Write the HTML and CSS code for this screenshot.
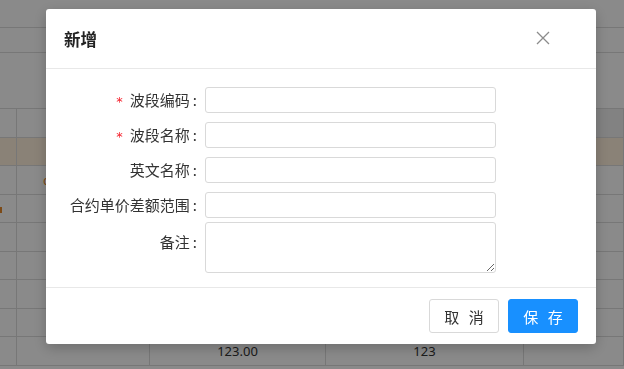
FILE: index.html
```html
<!DOCTYPE html>
<html lang="zh-CN">
    <head>
        <meta charset="UTF-8">
        <meta name="viewport" content="width=device-width, initial-scale=1.0">
        <title>波段管理</title>

        <link rel="stylesheet" href="styles.css">
    </head>
    <body>
        <div class="page">
            <div class="toolbar"></div>
            <div class="filters"></div>
            <div class="spacer"></div>

            <div class="grid">
                <div class="row head"><span class="c1"></span><span class="c2"></span><span class="c3"></span><span class="c4"></span><span class="c5"></span></div>
                <div class="row picked"><span class="c1"></span><span class="c2"></span><span class="c3"></span><span class="c4"></span><span class="c5"></span></div>
                <div class="row"><span class="c1"></span><span class="c2"><em class="tag">c</em></span><span class="c3"></span><span class="c4"></span><span class="c5"></span></div>
                <div class="row"><span class="c1"><i class="mark"></i></span><span class="c2"></span><span class="c3"></span><span class="c4"></span><span class="c5"></span></div>
                <div class="row"><span class="c1"></span><span class="c2"></span><span class="c3"></span><span class="c4"></span><span class="c5"></span></div>
                <div class="row"><span class="c1"></span><span class="c2"></span><span class="c3"></span><span class="c4"></span><span class="c5"></span></div>
                <div class="row"><span class="c1"></span><span class="c2"></span><span class="c3"></span><span class="c4"></span><span class="c5"></span></div>
                <div class="row"><span class="c1"></span><span class="c2"></span><span class="c3"></span><span class="c4"></span><span class="c5"></span></div>
                <div class="row"><span class="c1"></span><span class="c2"></span><span class="c3">123.00</span><span class="c4">123</span><span class="c5"></span></div>
            </div>
        </div>

        <div class="mask"></div>

        <div class="modal">
            <div class="modal-head">
                <strong>新增</strong>
                <a class="close" href="#">
                    <svg width="14" height="14" viewBox="0 0 14 14">
                        <path d="M1 1 L13 13 M13 1 L1 13" stroke="#8c8c8c" stroke-width="1.3" fill="none"/>
                    </svg>
                </a>
            </div>

            <form class="modal-body">
                <label class="req">波段编码</label>
                <input type="text">

                <label class="req">波段名称</label>
                <input type="text">

                <label>英文名称</label>
                <input type="text">

                <label>合约单价差额范围</label>
                <input type="text">

                <label class="top">备注</label>
                <textarea></textarea>
            </form>

            <div class="modal-foot">
                <button class="btn">取 消</button>
                <button class="btn primary">保 存</button>
            </div>
        </div>
    </body>
</html>
```

FILE: styles.css
```css
* {
    padding: 0px;
    margin: 0px;
    box-sizing: border-box;
    outline: 0;
    font-family: "Noto Sans", "Noto Sans CJK SC", sans-serif;
}

body {
    background-color: #fff;
    color: #333;
    font-size: 14px;
    width: 624px;
    height: 369px;
    overflow: hidden;
}

.toolbar {
    height: 28px;
    border-bottom: 1px solid #dcdcdc;
}

.filters {
    height: 25px;
    border-bottom: 1px solid #dcdcdc;
}

.spacer {
    height: 55px;
}

.grid {
    border-top: 1px solid #dcdcdc;
}

.grid .row {
    display: flex;
    height: 28.5px;
    border-bottom: 1px solid #dcdcdc;
}

.grid .row.head .c5 {
    background-color: #f0f0f0;
}

.grid .row.picked {
    background-color: #fff0dc;
}

.grid .row span {
    border-right: 1px solid #dcdcdc;
    line-height: 28px;
    text-align: center;
    font-size: 13px;
    position: relative;
}

.grid .c1 { width: 17px; }
.grid .c2 { width: 133px; }
.grid .c3 { width: 176px; }
.grid .c4 { width: 198px; }
.grid .c5 { flex: 1; border-right: none; }

.grid .tag {
    font-style: normal;
    color: #e58a2c;
    position: absolute;
    left: 26px;
    top: 0;
}

.grid .mark {
    position: absolute;
    left: 0;
    top: 12px;
    width: 2px;
    height: 6px;
    background-color: #e58a2c;
}

.mask {
    position: fixed;
    inset: 0;
    background-color: rgba(0, 0, 0, 0.46);
}

.modal {
    position: fixed;
    left: 46px;
    top: 9px;
    width: 550px;
    background-color: #fff;
    border-radius: 3px;
    box-shadow: 0 4px 14px rgba(0, 0, 0, 0.22);
}

.modal-head {
    height: 60px;
    padding: 0 18px;
    display: flex;
    align-items: center;
    justify-content: space-between;
    border-bottom: 1px solid #e8e8e8;
}

.modal-head strong {
    font-size: 16.5px;
    color: #222;
    font-family: "Noto Sans CJK SC", sans-serif;
    font-weight: 700;
}

.modal-head .close {
    display: flex;
    margin-right: 28px;
    margin-top: -2px;
}

.modal-body {
    display: grid;
    grid-template-columns: 159px 291px;
    grid-template-rows: repeat(4, 26px) 46px;
    row-gap: 9px;
    padding: 18px 0 14px;
}

.modal-body label {
    text-align: right;
    padding-right: 8px;
    height: 26px;
    line-height: 26px;
    font-size: 15px;
    color: #333;
    font-family: "Noto Sans CJK SC", sans-serif;
}

.modal-body label::after {
    content: ":";
    margin-left: 3px;
}

.modal-body label.req::before {
    content: "*";
    color: #f5222d;
    margin-right: 7px;
    font-family: "DejaVu Sans", sans-serif;
    font-size: 13px;
}

.modal-body label.top {
    margin-top: 2px;
}

.modal-body input {
    height: 26px;
    border: 1px solid #d9d9d9;
    border-radius: 3px;
}

.modal-body textarea {
    height: 51px;
    margin-top: -5px;
    border: 1px solid #d9d9d9;
    border-radius: 3px;
    resize: vertical;
}

.modal-foot {
    border-top: 1px solid #e8e8e8;
    height: 57px;
    padding: 11px 18px 0 0;
    display: flex;
    justify-content: flex-end;
    gap: 9px;
}

.btn {
    width: 70px;
    height: 34px;
    border: 1px solid #d9d9d9;
    border-radius: 3px;
    background-color: #fff;
    color: #333;
    font-size: 15px;
    letter-spacing: 3px;
    padding-left: 3px;
    font-family: "Noto Sans CJK SC", sans-serif;
}

.btn.primary {
    background-color: #1890ff;
    border-color: #1890ff;
    color: #fff;
}
```
